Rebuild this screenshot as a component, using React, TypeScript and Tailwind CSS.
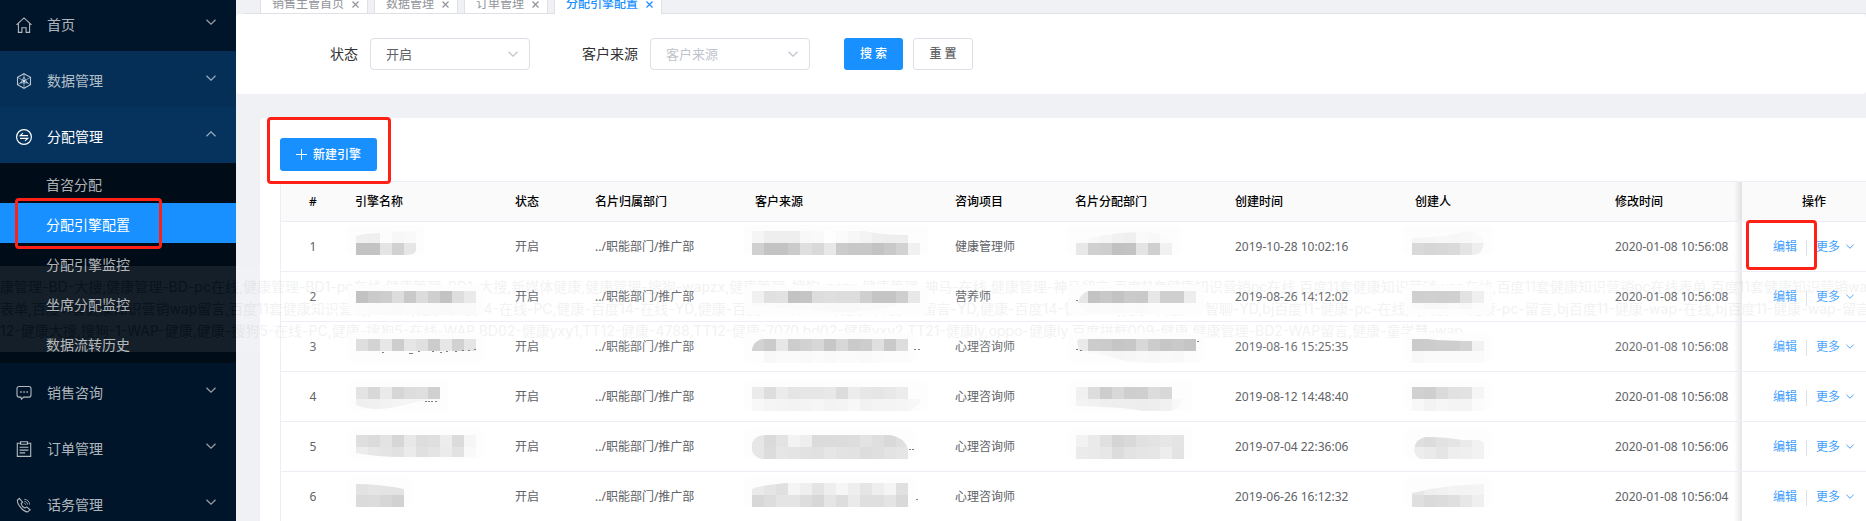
import { useId, useState } from 'react'
import type { ReactNode } from 'react'
import { clsx } from 'clsx'

type MosaicData = {
  top: number
  tiles: string[]
  clip?: string
  dots?: number[][]
}

type Engine = {
  id: number
  name: MosaicData
  source: MosaicData
  project: string
  dept?: MosaicData
  createdAt: string
  creator: MosaicData
  updatedAt: string
}

// tiles: one string per line of the mosaic, each tile a two digit hex grey
const engines: Engine[] = [
  {
    id: 1,
    name: { top: 9, tiles: ['f0 ef fc f7 f9', 'c3 c3 e4 d1 e6'], clip: 'M0 5Q10 2 24 2Q40 -1 60 1V20Q58 24 50 24H0Z' },
    source: {
      top: 9,
      tiles: ['f5 ee ee ee f8 f9 fe fb f7 f3 ef ee ee', 'd0 c3 c3 cb df d9 e8 cb c8 c8 c3 c9 d2 f1'],
      clip: 'M0 0H112Q130 4 156 4V12H168V24H0Z',
    },
    project: '健康管理师',
    dept: { top: 9, tiles: ['fb f8 f5 f1 ef fa f8 fc', 'e8 d0 ce c1 c3 e4 cf f1'], clip: 'M0 12Q30 0 70 1Q85 2 96 6V24H0Z' },
    createdAt: '2019-10-28 10:02:16',
    creator: { top: 9, tiles: ['f5 f6 f8 f7 f8 fa', 'd9 d6 d8 da e4 ee'], clip: 'M0 7Q30 7 54 0Q68 0 72 12Q70 24 62 24H0Z' },
    updatedAt: '2020-01-08 10:56:08',
  },
  {
    id: 2,
    name: { top: 19, tiles: ['c2 ca cd dd c9 dc cf c3 de ea', 'fc fb fb fa fb fa fa f9 fa fa'] },
    source: {
      top: 19,
      tiles: ['f0 e0 e2 c3 c5 dd df dd dd cf c5 c5 ce e8', 'fb fb fa fb fb fa f9 f9 f9 fa fa fa fb fc'],
      clip: 'M0 0H168V12H156Q110 24 70 20Q30 18 0 14Z',
    },
    project: '营养师',
    dept: {
      top: 19,
      tiles: ['e6 c3 c8 c3 ca c9 e7 cf cf ed', 'fb fa fb fa fb fa fc'],
      clip: 'M2 12Q4 3 12 0H120V12H84V22H10Z',
      dots: [[0, 9]],
    },
    createdAt: '2019-08-26 14:12:02',
    creator: { top: 19, tiles: ['cf d0 cf d0 e2 ef', 'fa f7 f8 fa f8 fc'], clip: 'M0 0H72V18H0Z' },
    updatedAt: '2020-01-08 10:56:08',
  },
  {
    id: 3,
    name: {
      top: 17,
      tiles: ['de d3 e7 cd e6 e0 cc e7 d1 e5'],
      dots: [[26, 13], [53, 14], [55, 14], [62, 12], [76, 12], [84, 13], [90, 12], [99, 12], [106, 11], [112, 11], [118, 10]],
    },
    source: {
      top: 17,
      tiles: ['d2 cb e7 cd d2 d7 c7 d7 ca cd df c9 dd', 'fd f8 fa fa f9 fb f9 fb fb f9 fb fc fc'],
      clip: 'M0 10Q2 2 10 0H156V24H12V12H0Z',
      dots: [[162, 10], [166, 10]],
    },
    project: '心理咨询师',
    dept: {
      top: 17,
      tiles: ['ea cc cb c5 c7 d8 cc c6 c9 c5', 'fc fa f7 f5 f6 f8 f7 f9 f8 fc'],
      clip: 'M1 2L3 0H120V22Q80 26 50 22Q30 16 3 12Z',
      dots: [[0, 10], [4, 11], [121, 2]],
    },
    createdAt: '2019-08-16 15:25:35',
    creator: { top: 17, tiles: ['cb cc ce ce d3 f2', 'f8 fa fa fa fa fa'], clip: 'M0 0H16Q30 2 72 2V24H0Z' },
    updatedAt: '2020-01-08 10:56:08',
  },
  {
    id: 4,
    name: {
      top: 15,
      tiles: ['e3 d8 ea d6 dd df d0', 'ef f0 f2 f4 f5 f6 f8'],
      clip: 'M0 0H84V12Q60 14 48 18Q20 26 0 18Z',
      dots: [[69, 14], [72, 14], [75, 14], [79, 14]],
    },
    source: {
      top: 15,
      tiles: ['eb dd eb e5 e6 e6 e8 dc ec e7 e5 e8 ec', 'f8 f5 f4 f3 f4 f6 f3 f4 f7 f2 f4 f4 f5 f7'],
      clip: 'M0 0H156V12H168V16L158 24H0Z',
    },
    project: '心理咨询师',
    dept: { top: 15, tiles: ['f1 dd cd d8 ce cf dc d8', 'f3 f1 ef ee ee ed ee f1 f8'], clip: 'M0 0H96V12H106Q104 24 92 24H66Q50 20 0 19Z' },
    createdAt: '2019-08-12 14:48:40',
    creator: { top: 15, tiles: ['d1 cf da e1 e2 f5', 'f8 f3 f6 f4 f4 fb'] },
    updatedAt: '2020-01-08 10:56:08',
  },
  {
    id: 5,
    name: {
      top: 13,
      tiles: ['df db e3 d6 e8 dd df ed db f6', 'ec e7 e4 e1 eb e0 e4 eb e2 f9'],
      clip: 'M0 0H120V22H48Q20 22 0 18Z',
    },
    source: {
      top: 13,
      tiles: ['e6 da e3 f3 ee db db dc dd e3 de d9 df', 'e6 dc e6 e4 e2 e1 e6 e3 e2 dd df e3 e5'],
      clip: 'M0 8Q4 0 14 0H138Q152 2 156 14V24H10Q2 22 0 16Z',
      dots: [[157, 14], [160, 14]],
    },
    project: '心理咨询师',
    dept: { top: 13, tiles: ['f2 ea e0 d5 d9 e1 e3 e6 e4', 'eb ea e7 dc e3 e5 e6 ed e3'] },
    createdAt: '2019-07-04 22:36:06',
    creator: { top: 13, tiles: ['df dc e2 e4 ea f2', 'ed ea e5 ee ef f2'], clip: 'M2 14Q4 3 14 2Q34 2 50 5H66Q72 6 72 10V24H8Q2 20 2 14Z' },
    updatedAt: '2020-01-08 10:56:06',
  },
  {
    id: 6,
    name: { top: 11, tiles: ['e2 e5 e4 e3', 'db dc d7 d2'], clip: 'M0 1Q24 1 48 6V24H0Z' },
    source: {
      top: 11,
      tiles: ['ea e5 e0 f5 ef e4 ee f6 ee e5 ee f5 e0', 'd8 dd e4 e4 dd d7 e5 dd ea df df e4 d9'],
      clip: 'M0 6Q10 2 34 0H156V24H0Z',
      dots: [[164, 16]],
    },
    project: '心理咨询师',
    createdAt: '2019-06-26 16:12:32',
    creator: { top: 11, tiles: ['e8 ef f1 f3 f3 f4', 'df da dc df e7 ef'], clip: 'M0 10Q10 8 18 6Q40 2 72 1V24H0Z' },
    updatedAt: '2020-01-08 10:56:04',
  },
]

function Mosaic({ data, className }: { data: MosaicData; className?: string }) {
  const id = useId()
  const cols = Math.max(...data.tiles.map((line) => line.split(' ').length))

  return (
    <svg width={cols * 12} height={49} className={clsx('relative z-10 block overflow-visible', className)} aria-hidden="true">
      {data.clip && (
        <clipPath id={id}>
          <path d={data.clip} />
        </clipPath>
      )}
      <g transform={`translate(0 ${data.top})`}>
        <rect x={-8} y={-6} width={cols * 12 + 16} height={30} rx={6} fill="#fdfdfd" />
        <g clipPath={data.clip ? `url(#${id})` : undefined} shapeRendering="crispEdges">
          {data.tiles.map((line, y) =>
            line.split(' ').map((g, x) => (
              <rect key={`${y}-${x}`} x={x * 12} y={y * 12} width={12} height={12} fill={`#${g}${g}${g}`} />
            )),
          )}
        </g>
        {data.dots?.map(([x, y]) => <rect key={x} x={x} y={y} width={2} height={1} fill="#7c7e82" />)}
      </g>
    </svg>
  )
}

function Icon({ children }: { children: ReactNode }) {
  return (
    <svg width={16} height={16} viewBox="0 0 16 16" fill="none" stroke="currentColor" strokeWidth={1.1} className="shrink-0" aria-hidden="true">
      {children}
    </svg>
  )
}

function Chevron({ up, className }: { up?: boolean; className?: string }) {
  return (
    <svg viewBox="0 0 10 6" fill="none" stroke="currentColor" strokeWidth={1.2} className={className} aria-hidden="true">
      <path d={up ? 'M.5 5.2 5 .8l4.5 4.4' : 'M.5.8 5 5.2 9.5.8'} />
    </svg>
  )
}

const HomeIcon = () => (
  <Icon>
    <path d="M.5 7.8 8 .9l7.500 6.900M2.400 6.300v9.100h3.500v-4.600h4.200v4.600h3.500V6.300" />
  </Icon>
)

const DataIcon = () => (
  <Icon>
    <path d="M8 .7l6.500 3.600v7.400L8 15.300l-6.500-3.600V4.300Z" />
    <path d="M8 .7v14.600M1.500 4.300l13 7.400M14.500 4.300l-13 7.400" strokeWidth={0.7} />
    <path d="M8 4.200l3.400 5.700H4.600Z" strokeWidth={0.8} />
    <circle cx={8} cy={8} r={1.3} fill="currentColor" stroke="none" />
  </Icon>
)

const SwapIcon = () => (
  <Icon>
    <circle cx={8} cy={8} r={7.4} strokeWidth={1.2} />
    <path d="M12 6.600H4.200L7 4.200M4 9.400h7.800L9 11.800" />
  </Icon>
)

const ChatIcon = () => (
  <Icon>
    <path d="M3 1.500h10a2 2 0 0 1 2 2v6.600a2 2 0 0 1-2 2H7.600l-2.200 2.100-.5-2.100H3a2 2 0 0 1-2-2V3.500a2 2 0 0 1 2-2Z" />
    <path d="M4.200 7h1.500M7.300 7h1.500M10.400 7h1.500" strokeWidth={1.500} />
  </Icon>
)

const OrderIcon = () => (
  <Icon>
    <path d="M4.500 2.200H1.300v13.200h13.400V2.200h-3.200" />
    <path d="M4.500.7h7v2.600h-7ZM3.600 6.300h8.800M3.600 9.100h8.800M3.600 11.900h5.600" />
  </Icon>
)

const PhoneIcon = () => (
  <Icon>
    <path d="M3.300 1.300 1.500 3c-1 3.600 5.300 11.600 10 12l2.600-2.200-3.400-2.900-1.800 1.200C7.300 10.500 5.500 8.300 5.100 6.500l1.500-1.400Z" />
    <path d="M8.300 4.300c1.800.2 3 1.400 3.300 3.300M8.300 6.300c.8.100 1.200.6 1.300 1.400M8.300 2.300c3 .1 5.200 2.200 5.300 5.300" strokeWidth={0.8} />
  </Icon>
)

const subMenu = ['首咨分配', '分配引擎配置', '分配引擎监控', '坐席分配监控', '数据流转历史']

const tabs = ['销售主管首页', '数据管理', '订单管理', '分配引擎配置']

// text of the channel tooltip while it fades out
const channelLines = [
  '康管理-BD-大搜,健康管理-BD-pc在线,健康管理-BD1-pc在线,健康管理-BD1-大搜,新媒体健康,健康管理-搜狗-wapzx,健康管理-搜狗-pczx,健康管理-神马-在线,健康管理-神马留言,百度11套健康知识营销pc在线,百度11套健康知识营销wap在线,百度11套健康知识营销pc在线表单,百度11套健康知识营销wap在线',
  '表单,百度11套健康知识营销wap留言,百度11套健康知识营销pc留言,健康-百度14-在线-PC,健康-百度14-在线-YD,健康-百度14-留言-PC,健康-百度14-留言-YD,健康-百度14-智聊-PC,健康-百度14-智聊-YD,bj百度11-健康-pc-在线,bj百度11-健康-pc-留言,bj百度11-健康-wap-在线,bj百度11-健康-wap-留言',
  '12-健康大搜,搜狗-1-WAP-健康,健康-搜狗5-在线-PC,健康-搜狗5-在线-WAP,BD02-健康yxy1,TT12-健康-4788,TT12-健康-7070,bd02-健康yxy2,TT21-健康ly,oppo-健康ly,百度拼框009-健康,健康管理-BD2-WAP留言,健康-童学慧-wap',
]

function MenuItem({ icon, label, open, className }: { icon: ReactNode; label: string; open?: boolean; className: string }) {
  return (
    <button
      type="button"
      aria-expanded={!!open}
      className={clsx('flex w-full items-center pr-5 pl-4 text-sm', open ? 'text-white' : 'text-white/70', className)}
    >
      {icon}
      <span className="ml-[15px]">{label}</span>
      <Chevron up={open} className="mb-1.5 ml-auto h-[6px] w-[10px] text-white/60" />
    </button>
  )
}

function Sidebar() {
  return (
    <aside className="w-[236px] shrink-0 overflow-hidden bg-[#001529]">
      <nav>
        <MenuItem icon={<HomeIcon />} label="首页" className="h-[51px] pb-[2px]" />
        <MenuItem icon={<DataIcon />} label="数据管理" className="h-14 bg-[#052f57] pt-1" />
        <MenuItem icon={<SwapIcon />} label="分配管理" open className="h-14 bg-[#06335e] pt-1" />
        <ul className="bg-[#000c17]">
          {subMenu.map((item) => {
            const active = item === '分配引擎配置'
            return (
              <li key={item} className="relative">
                <a
                  href="#"
                  className={clsx('flex h-10 items-center pt-1 pl-[46px] text-sm', active ? 'bg-[#1890ff] text-white' : 'text-white/70')}
                >
                  {item}
                </a>
                {active && <Highlight className="-top-[5px] left-[15px] h-[51px] w-[147px]" />}
              </li>
            )
          })}
        </ul>
        <MenuItem icon={<ChatIcon />} label="销售咨询" className="h-14 pt-1" />
        <MenuItem icon={<OrderIcon />} label="订单管理" className="h-14 pt-1" />
        <MenuItem icon={<PhoneIcon />} label="话务管理" className="h-14 pt-1" />
      </nav>
    </aside>
  )
}

function Highlight({ className }: { className: string }) {
  return <span className={clsx('pointer-events-none absolute z-10 rounded-[4px] border-3 border-[#ff2116]', className)} />
}

function Tabs() {
  return (
    <div className="ml-2 flex h-[14px] shrink-0 items-end gap-[6px] border-b border-[#dfe1e6] pl-4 text-xs leading-4">
      {tabs.map((tab) => {
        const active = tab === '分配引擎配置'
        return (
          <div
            key={tab}
            className={clsx(
              'flex h-6 items-end gap-2 border-x border-[#dfe1e6] bg-white pr-2 pl-[11px]',
              active ? '-mb-px pb-[2px] font-medium text-[#1890ff]' : 'pb-px text-[#909399]',
            )}
          >
            <a href="#">{tab}</a>
            <button type="button" aria-label={`关闭${tab}`} className="flex h-4 items-center">
              <svg width={7} height={7} viewBox="0 0 7 7" stroke="currentColor" strokeWidth={1.2} className="mt-px">
                <path d="M.5.5l6 6M6.500.5l-6 6" />
              </svg>
            </button>
          </div>
        )
      })}
    </div>
  )
}

function Filters() {
  const [status, setStatus] = useState('开启')
  const [source, setSource] = useState('')

  return (
    <form className="flex h-20 shrink-0 items-center rounded-sm bg-white pl-[94px] text-sm text-[#303133]">
      <label htmlFor="status">状态</label>
      <div className="relative ml-3">
        <select
          id="status"
          value={status}
          onChange={(e) => setStatus(e.target.value)}
          className="block h-8 w-40 appearance-none rounded border border-[#dcdfe6] bg-white px-[15px] text-[13px] text-[#606266]"
        >
          <option>开启</option>
          <option>关闭</option>
        </select>
        <Chevron className="pointer-events-none absolute top-[13px] right-3 h-[6px] w-[10px] text-[#c0c4cc]" />
      </div>
      <label htmlFor="source" className="ml-[52px]">客户来源</label>
      <div className="relative ml-3">
        <select
          id="source"
          value={source}
          onChange={(e) => setSource(e.target.value)}
          className="block h-8 w-40 appearance-none rounded border border-[#dcdfe6] bg-white px-[15px] text-[13px] text-[#c0c4cc]"
        >
          <option value="">客户来源</option>
        </select>
        <Chevron className="pointer-events-none absolute top-[13px] right-3 h-[6px] w-[10px] text-[#c0c4cc]" />
      </div>
      <button type="button" className="ml-[34px] h-8 w-[59px] rounded-[3px] bg-[#1890ff] text-xs font-medium text-white">搜 索</button>
      <button type="button" className="ml-[10px] h-8 w-[60px] rounded-[3px] border border-[#dcdfe6] bg-white text-xs font-medium text-[#606266]">
        重 置
      </button>
    </form>
  )
}

const th = 'h-10 border-b border-[#ebeef5] bg-[#fafafa] px-[10px] font-medium text-black'
const thLeft = clsx(th, 'text-left')
const td = 'h-[50px] border-b border-[#ebeef5] px-[10px] py-0'
const fixedCell =
  'relative before:pointer-events-none before:absolute before:inset-y-0 before:-left-2 before:w-2 before:bg-linear-to-l before:from-black/10 before:to-transparent'

function EngineTable() {
  return (
    <div className="mt-[10px] overflow-hidden border-t border-l border-[#ebeef5]">
      <table className="w-full min-w-[1605px] table-fixed border-separate border-spacing-0 text-xs whitespace-nowrap text-[#606266]">
        <colgroup>
          <col className="w-16" />
          <col className="w-40" />
          <col className="w-20" />
          <col className="w-40" />
          <col className="w-[200px]" />
          <col className="w-[120px]" />
          <col className="w-40" />
          <col className="w-[180px]" />
          <col className="w-[200px]" />
          <col className="w-[137px]" />
          <col />
        </colgroup>
        <thead>
          <tr>
            <th className={clsx(th, 'text-center')}>#</th>
            <th className={thLeft}>引擎名称</th>
            <th className={thLeft}>状态</th>
            <th className={thLeft}>名片归属部门</th>
            <th className={thLeft}>客户来源</th>
            <th className={thLeft}>咨询项目</th>
            <th className={thLeft}>名片分配部门</th>
            <th className={thLeft}>创建时间</th>
            <th className={thLeft}>创建人</th>
            <th className={thLeft}>修改时间</th>
            <th className={clsx(th, fixedCell, 'text-center')}>操作</th>
          </tr>
        </thead>
        <tbody>
          {engines.map((e) => (
            <tr key={e.id}>
              <td className={clsx(td, 'text-center')}>{e.id}</td>
              <td className={td}><Mosaic data={e.name} className="ml-px" /></td>
              <td className={td}>开启</td>
              <td className={td}>../职能部门/推广部</td>
              <td className={td}><Mosaic data={e.source} className="-ml-[3px]" /></td>
              <td className={td}>{e.project}</td>
              <td className={td}>{e.dept && <Mosaic data={e.dept} className="ml-px" />}</td>
              <td className={td}>{e.createdAt}</td>
              <td className={td}><Mosaic data={e.creator} className="-ml-[3px]" /></td>
              <td className={td}>{e.updatedAt}</td>
              <td className={clsx(td, fixedCell)}>
                <div className="flex items-center pl-[21px] text-[#409eff]">
                  <button type="button">编辑</button>
                  <span className="mt-[3px] ml-[9px] h-4 w-px bg-[#dcdfe6]" />
                  <button type="button" className="ml-[9px] flex items-center">
                    更多
                    <Chevron className="ml-[6px] h-[5px] w-2" />
                  </button>
                </div>
                {e.id === 1 && <Highlight className="-top-[2px] left-1 h-[50px] w-[71px]" />}
              </td>
            </tr>
          ))}
        </tbody>
      </table>
    </div>
  )
}

export default function App() {
  return (
    <div className="relative flex h-screen overflow-hidden bg-[#f0f1f5] font-['Noto_Sans','Noto_Sans_CJK_SC',sans-serif]">
      <Sidebar />
      <main className="flex min-w-0 flex-1 flex-col">
        <Tabs />
        <Filters />
        <section className="mt-6 ml-6 flex-1 rounded-tl-sm bg-white pt-5 pl-5">
          <div className="relative w-fit">
            <button type="button" className="flex h-[33px] w-[97px] items-center justify-center gap-[6px] rounded-[3px] bg-[#1890ff] text-xs font-medium text-white">
              <svg width={11} height={11} viewBox="0 0 11 11" stroke="currentColor" aria-hidden="true">
                <path d="M5.500 0v11M0 5.500h11" />
              </svg>
              新建引擎
            </button>
            <Highlight className="-top-[21px] -left-[13px] h-[67px] w-[124px]" />
          </div>
          <EngineTable />
        </section>
      </main>
      <div
        role="tooltip"
        className="pointer-events-none absolute inset-x-0 top-[266px] overflow-hidden bg-white py-[10px] font-['Inter','Noto_Sans_CJK_SC',sans-serif] text-sm leading-[22px] whitespace-nowrap text-[#606266] opacity-8"
      >
        {channelLines.map((line) => (
          <p key={line}>{line}</p>
        ))}
      </div>
    </div>
  )
}
